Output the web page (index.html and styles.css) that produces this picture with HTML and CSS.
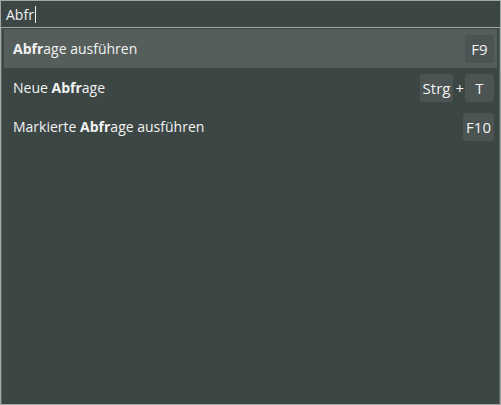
FILE: index.html
```html
<!DOCTYPE html>
<html>
<head>
<meta charset="utf-8">
<link rel="stylesheet" href="styles.css">
</head>
<body>
<div class="palette">
  <div class="search"><span class="query">Abfr</span><span class="caret"></span></div>
  <div class="list">
    <div class="row active">
      <span class="label"><b>Abfr</b>age ausführen</span>
      <span class="keys"><span class="key">F9</span></span>
    </div>
    <div class="row">
      <span class="label">Neue <b>Abfr</b>age</span>
      <span class="keys"><span class="key">Strg</span><span class="plus">+</span><span class="key">T</span></span>
    </div>
    <div class="row">
      <span class="label">Markierte <b>Abfr</b>age ausführen</span>
      <span class="keys"><span class="key">F10</span></span>
    </div>
  </div>
</div>
</body>
</html>
```
FILE: styles.css
```css
html, body {
  margin: 0;
  padding: 0;
  background: #3c4644;
}
.palette {
  width: 501px;
  height: 405px;
  box-sizing: border-box;
  border: 1px solid #a3a8a6;
  background: #3c4644;
  display: flex;
  flex-direction: column;
  font-family: "Open Sans", "Noto Sans", sans-serif;
  color: #f2f2f2;
}
.search {
  height: 26px;
  border-bottom: 1px solid #a3a8a6;
  display: flex;
  align-items: center;
  padding-left: 5px;
  font-size: 14px;
}
.caret {
  display: inline-block;
  width: 1px;
  height: 17px;
  background: #f2f2f2;
  margin-left: 1px;
}
.list {
  flex: 1;
  border-left: 1px solid #5d6563;
  border-right: 1px solid #5d6563;
  padding: 1px 2px;
}
.row {
  height: 39px;
  display: flex;
  align-items: center;
  justify-content: space-between;
  padding: 0 3px 0 9px;
  font-size: 14px;
}
.row.active {
  background: #555e5b;
}
.row b {
  font-weight: 700;
}
.keys {
  display: flex;
  align-items: center;
}
.key {
  min-width: 29px;
  height: 28px;
  box-sizing: border-box;
  padding: 0 3px;
  display: flex;
  align-items: center;
  justify-content: center;
  background: #4b5452;
  border-radius: 3px;
  font-size: 15px;
}
.plus {
  margin: 0 1px 0 2px;
  font-size: 15px;
}
```
